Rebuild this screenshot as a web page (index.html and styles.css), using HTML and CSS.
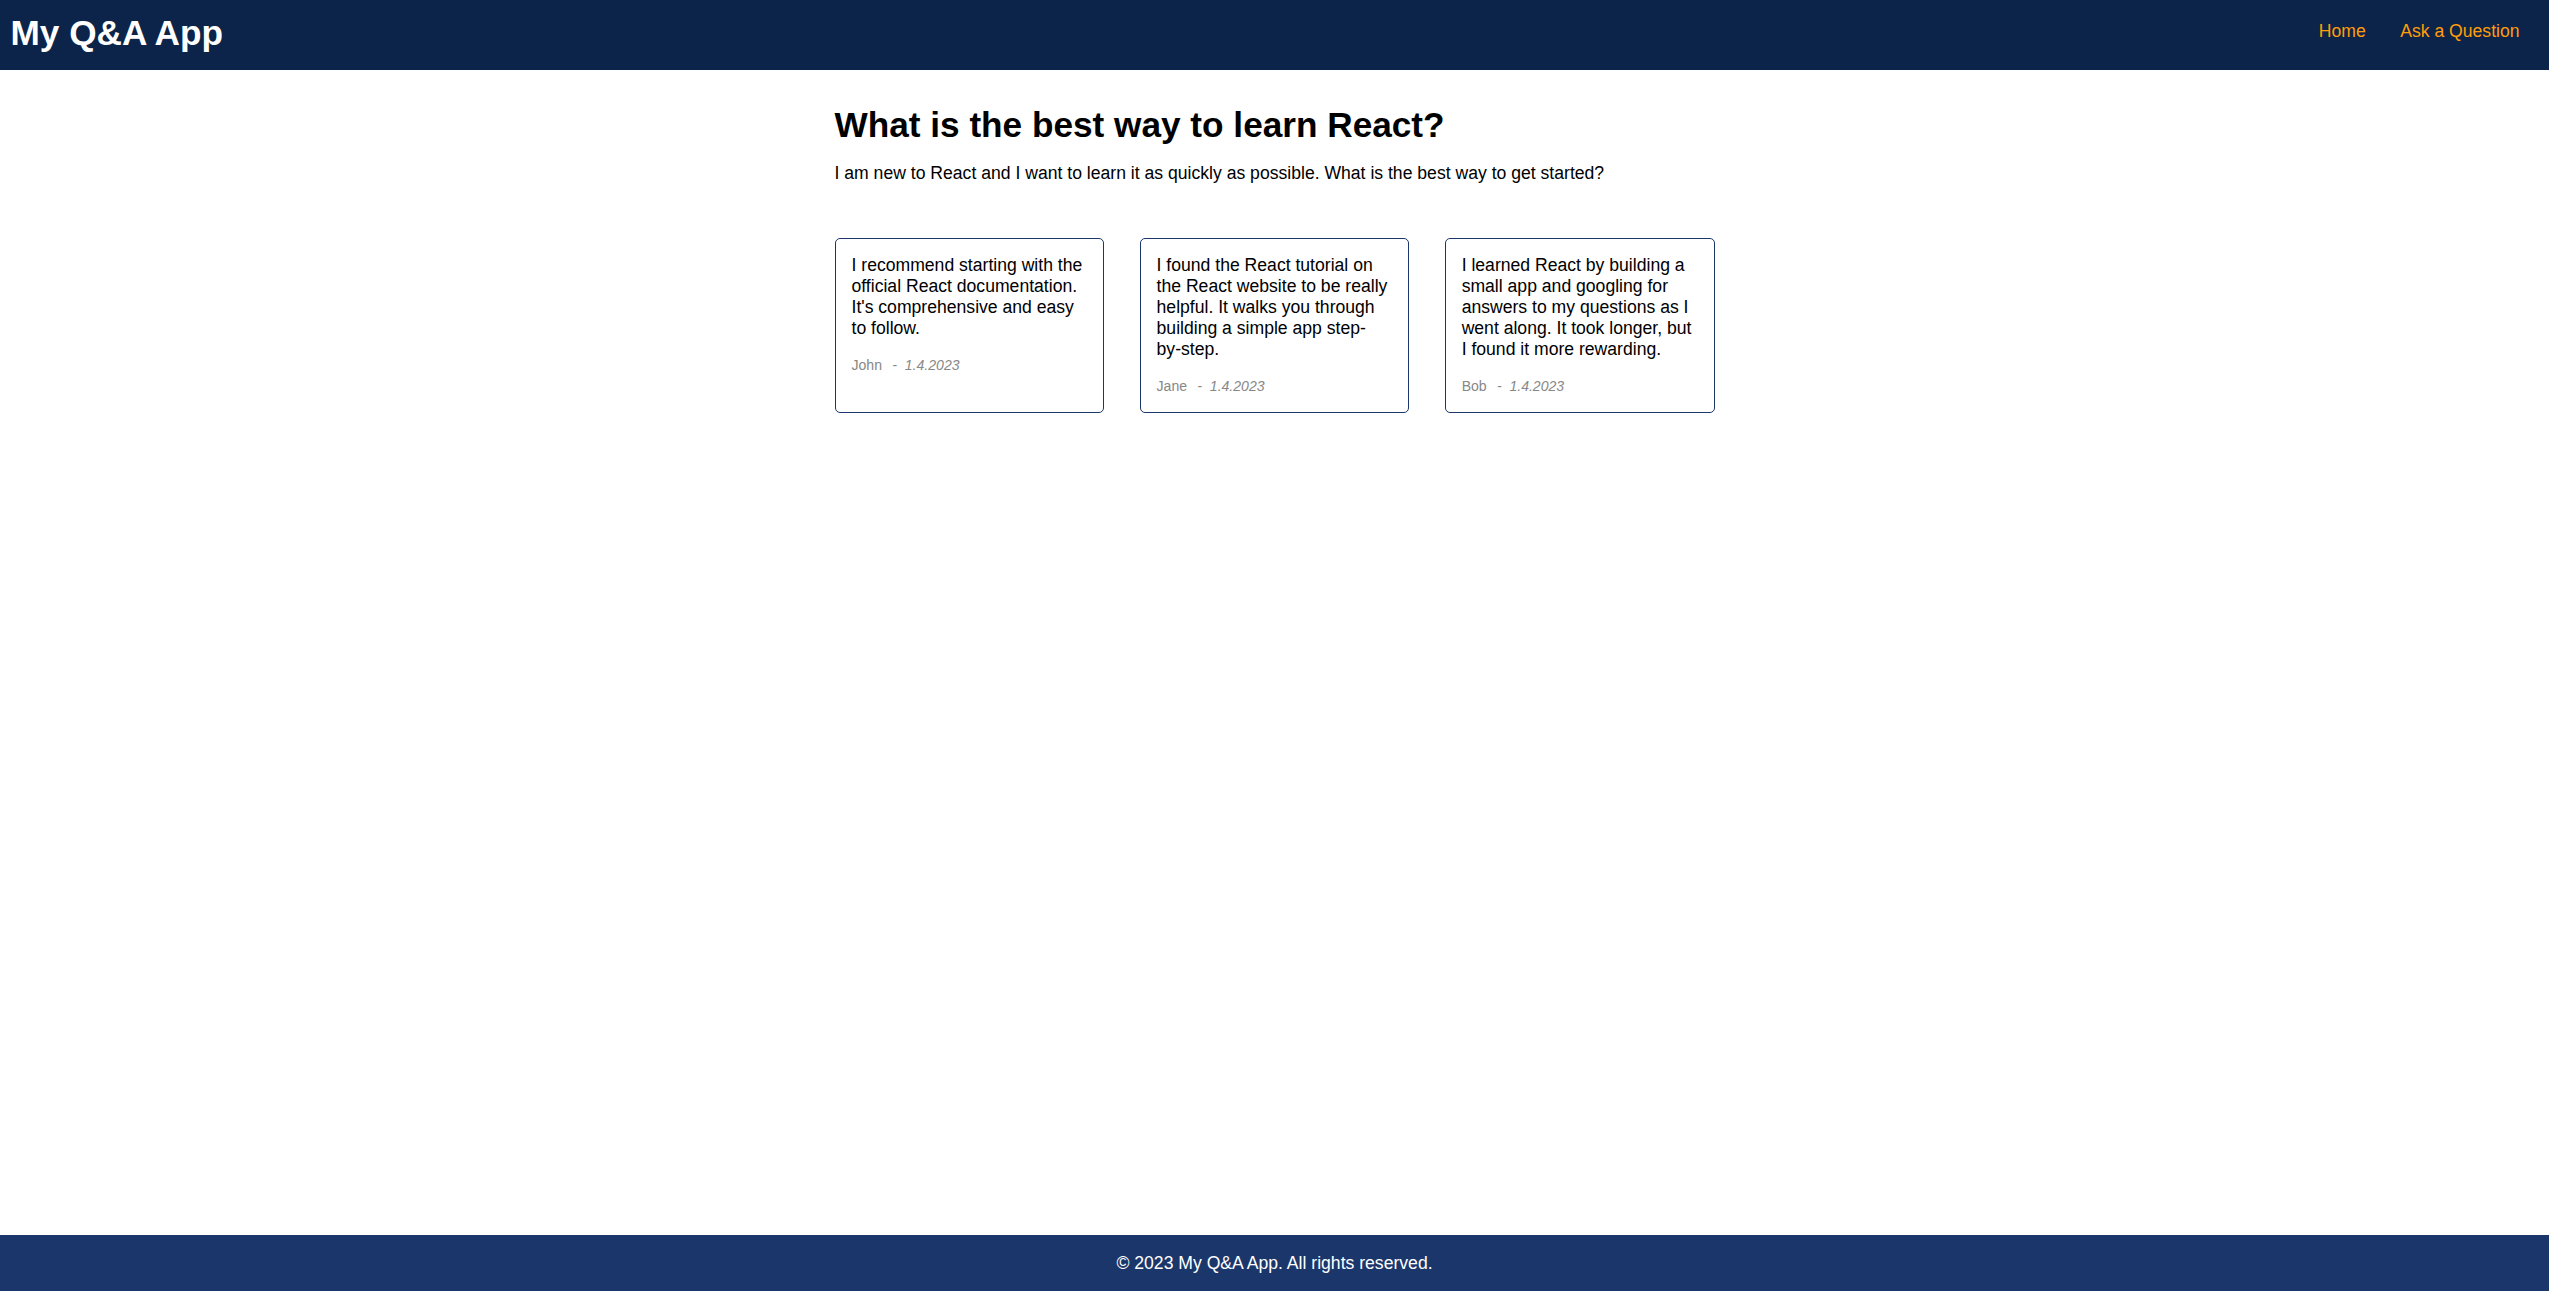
FILE: index.html
```html
<!DOCTYPE html>
<html lang="en">
<head>
<meta charset="utf-8">
<title>My Q&amp;A App</title>
<link rel="stylesheet" href="styles.css">
</head>
<body>
<header class="site-header">
  <h1 class="brand">My Q&amp;A App</h1>
  <nav class="nav">
    <a class="nav-link" href="#">Home</a>
    <a class="nav-link" href="#">Ask a Question</a>
  </nav>
</header>
<main class="main">
  <div class="container">
    <h2 class="q-title">What is the best way to learn React?</h2>
    <p class="q-body">I am new to React and I want to learn it as quickly as possible. What is the best way to get started?</p>
    <div class="answers">
      <div class="answer-card">
        <p class="answer-text">I recommend starting with the official React documentation. It's comprehensive and easy to follow.</p>
        <div class="answer-meta"><span class="author">John</span><span class="sep">-</span><span class="date">1.4.2023</span></div>
      </div>
      <div class="answer-card">
        <p class="answer-text">I found the React tutorial on the React website to be really helpful. It walks you through building a simple app step-by-step.</p>
        <div class="answer-meta"><span class="author">Jane</span><span class="sep">-</span><span class="date">1.4.2023</span></div>
      </div>
      <div class="answer-card">
        <p class="answer-text">I learned React by building a small app and googling for answers to my questions as I went along. It took longer, but I found it more rewarding.</p>
        <div class="answer-meta"><span class="author">Bob</span><span class="sep">-</span><span class="date">1.4.2023</span></div>
      </div>
    </div>
  </div>
</main>
<footer class="site-footer">
  <p class="footer-text">© 2023 My Q&amp;A App. All rights reserved.</p>
</footer>
</body>
</html>
```
FILE: styles.css
```css
html, body {
  margin: 0;
  padding: 0;
}

body {
  font-family: "Liberation Sans", Arial, sans-serif;
  font-size: 17.6px;
  color: #000;
  background: #fff;
  display: flex;
  flex-direction: column;
  min-height: 100vh;
}

.site-header {
  height: 70px;
  box-sizing: border-box;
  background: #0c2449;
  display: flex;
  justify-content: space-between;
  align-items: flex-start;
  padding: 13px 29.5px 0 10.5px;
}

.brand {
  margin: 0;
  font-size: 35.2px;
  font-weight: bold;
  color: #fff;
  line-height: normal;
}

.nav {
  display: flex;
  gap: 34.5px;
  margin-top: 8.4px;
}

.nav-link {
  color: #ff9d0a;
  text-decoration: none;
}

.main {
  flex: 1;
}

.container {
  width: 880px;
  margin: 0 auto;
  padding-top: 35.2px;
}

.q-title {
  margin: 0 0 17.6px;
  font-size: 35.2px;
  font-weight: bold;
  line-height: normal;
}

.q-body {
  margin: 0;
}

.answers {
  display: grid;
  grid-template-columns: repeat(3, 1fr);
  gap: 35.2px;
  margin-top: 54px;
}

.answer-card {
  border: 1px solid #1b366b;
  border-radius: 5px;
  padding: 16px 19.2px 17.6px 16px;
}

.answer-text {
  margin: 0 0 18px;
  line-height: 1.2;
}

.answer-meta {
  font-size: 14.08px;
  color: #888;
}

.sep {
  margin: 0 7.5px 0 10.5px;
}

.date {
  font-style: italic;
}

.site-footer {
  background: #1b366b;
  color: #fff;
  text-align: center;
  padding: 17.4px 0;
}

.footer-text {
  margin: 0;
}
```
